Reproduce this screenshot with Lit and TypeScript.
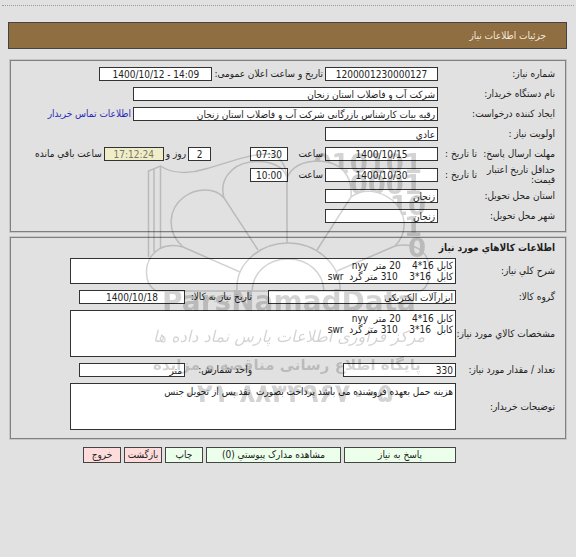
import { LitElement, html, css, svg } from "lit";
import { customElement } from "lit/decorators.js";

const GOODS = "کابل 16*4    20 متر  nyy\nکابل  16*3    310 متر گرد  swr";
const NOTES = "هزینه حمل بعهده فروشنده می باشد پرداخت بصورت  نقد پس از تحویل جنس";

@customElement("need-watermark")
export class NeedWatermark extends LitElement {
  static styles = css`
    :host { display: block; pointer-events: none; direction: ltr; }
    .art { display: block; width: 100%; opacity: 0.17; }
    .line { fill: none; stroke: #000; stroke-width: 1.5; }
    .digits { font: bold 26px "DejaVu Sans", sans-serif; }
    .latin { font: bold 28px "DejaVu Sans", sans-serif; }
    .script { font: italic 16px "DejaVu Sans", sans-serif; direction: rtl; }
    .slogan { font: bold 15px "DejaVu Sans", sans-serif; direction: rtl; }
    .phone { font: bold 26px "DejaVu Sans", sans-serif; }
  `;

  render() {
    return html`
      <svg class="art" viewBox="142 140 292 270" aria-hidden="true">
        ${svg`
          <defs>
            <mask id="behind">
              <rect x="142" y="140" width="292" height="270" fill="#fff" />
              <path fill="#000" d="M287 243V178C292 165 304 161 320 161C340 162 353 175 351 197C363 188 379 190 392 200C404 211 407 232 395 246L340 300H287Z" />
            </mask>
          </defs>
          <g class="line">
            <path d="M148.500 257V171L160.500 166V249M154 252V169M160.500 166C172 174 190 174 205 169C230 162 250 154 268 154Q285 156 287 178V243" />
            <path d="M258 250L224 198C219 180 231 165 250 162C270 160 284 166 287 178C292 165 304 161 320 161C340 162 353 175 351 197L317 250" />
            <path d="M224 198C215 187 196 188 184 197C168 209 166 232 183 247L240 272M183 247C165 242 151 250 147 266C145 279 149 287 156 291" />
            <path d="M351 197C363 188 379 190 392 200C406 211 409 232 395 246L337 271M395 246C413 242 427 250 429 265C431 279 428 287 421 291" />
            <path d="M237 291C235 263 261 243 288 243S341 263 340 291M252 291C253 272 268 259 288 259S323 272 324 291M156 291H421" />
          </g>
          <g class="digits" mask="url(#behind)">
            <text x="422" y="173" text-anchor="end">010101</text>
            <text x="422" y="194" text-anchor="end">0001</text>
            <text x="426" y="215" text-anchor="end">10</text>
            <text x="422" y="236" text-anchor="end">1</text>
            <text x="426" y="257" text-anchor="end">0</text>
          </g>
          <text class="latin" x="289" y="311" text-anchor="middle">ParsNamadData</text>
          <text class="script" x="289" y="342" text-anchor="middle">مرکز فرآوری اطلاعات پارس نماد داده ها</text>
          <text class="slogan" x="287" y="370" text-anchor="middle">پایگاه اطلاع رسانی مناقصه و مزایده</text>
          <text class="phone" x="287" y="402" text-anchor="middle">۰۲۱-۸۸۳۴۹۶۷۰-۵</text>
        `}
      </svg>
    `;
  }
}

@customElement("app-root")
export class AppRoot extends LitElement {
  static styles = css`
    :host {
      display: block;
      direction: rtl;
      min-height: 100vh;
      box-sizing: border-box;
      padding: 5px 2px 0;
      background: #e1e1e1;
      color: #222;
      font: 10px/10px "DejaVu Sans Condensed", "DejaVu Sans", sans-serif;
    }
    * { box-sizing: border-box; }
    .rule { border: 0; border-top: 1px dotted #999; margin: 0; }
    .title {
      margin: 16px 7px 0 6px;
      height: 27px;
      padding: 0 20px;
      border: 1px solid #444;
      background: #8f6e42;
      color: #f3eadb;
      font-size: 10px;
      font-weight: normal;
      line-height: 26px;
    }
    .page { position: relative; margin: 11px 8px 0; }
    .panel {
      margin: 0 0 5px;
      padding: 3px 10px 5px;
      border: 1px solid #808080;
      box-shadow: 0 0 0 1px #c6c6c6;
    }
    .row { display: flex; align-items: center; min-height: 20px; }
    .row.tall { min-height: 22px; }
    .label { flex: none; width: 117px; white-space: nowrap; }
    .label.short { width: 78px; }
    .label.wrap { white-space: normal; padding-left: 4px; }
    .label.till { width: 39px; }
    .label.goods { width: 99px; }
    .label.second { width: 67px; margin-right: 16px; }
    .text { flex: none; white-space: nowrap; padding: 0 2px; }
    .hour { width: 37px; }
    .spacer { flex: none; width: 39px; }
    .fill { flex: none; width: 75px; }
    .field {
      flex: none;
      display: block;
      height: 14px;
      margin: 0;
      padding: 0 2px;
      border: 1px solid #333;
      border-radius: 0;
      background: #fff;
      color: #222;
      font: inherit;
      line-height: 12px;
      outline: none;
    }
    .center { text-align: center; }
    .w-xs { width: 23px; }
    .w-s { width: 38px; }
    .w-m { width: 60px; }
    .w-d { width: 106px; }
    .w-n { width: 113px; }
    .w-g { width: 188px; }
    .w-l { width: 305px; }
    .left { background: #f0eec8; color: #776; }
    .contact { color: #2a2ab8; text-decoration: none; white-space: nowrap; padding: 0 2px; }
    .heading { margin: 0; font-size: 10px; line-height: 14px; }
    .area {
      flex: 1;
      height: 47px;
      margin-left: 49px;
      padding: 2px;
      resize: none;
      overflow: hidden;
      line-height: 11px;
    }
    .area.low { height: 26px; padding: 1px 2px; }
    .row.block { margin: 3px 0; }
    .actions { display: flex; gap: 3px; margin: 8px 110px 0 0; }
    .action {
      height: 16px;
      padding: 0;
      border: 1px solid #444;
      border-radius: 0;
      background: #ebffeb;
      color: #222;
      font: inherit;
      white-space: nowrap;
    }
    .action.wide { width: 135px; }
    .action.mid { width: 112px; }
    .action.small { width: 38px; }
    .action.exit { background: #ffdcdc; }
    .mark { position: absolute; top: 80px; left: 0; right: 0; width: 292px; margin: 0 auto; }
  `;

  private field(id: string, value: string, cls: string) {
    return html`<input class="field ${cls}" id=${id} .value=${value} readonly />`;
  }

  private label(id: string, text: string, cls = "") {
    return html`<label class="label ${cls}" for=${id}>${text}</label>`;
  }

  render() {
    return html`
      <hr class="rule" />
      <h1 class="title">جزئیات اطلاعات نیاز</h1>
      <main class="page">
        <section class="panel">
          <div class="row">
            ${this.label("number", "شماره نیاز:")}
            ${this.field("number", "1200001230000127", "w-n center")}
            <label class="text" for="announced">تاریخ و ساعت اعلان عمومی:</label>
            <input class="field w-n center" id="announced" dir="ltr" .value=${"1400/10/12 - 14:09"} readonly />
          </div>
          <div class="row">
            ${this.label("buyer", "نام دستگاه خریدار:")}
            ${this.field("buyer", "شرکت آب و فاضلاب استان زنجان", "w-l")}
          </div>
          <div class="row">
            ${this.label("creator", "ایجاد کننده درخواست:")}
            ${this.field("creator", "رقیه بیات کارشناس بازرگانی شرکت آب و فاضلاب استان زنجان", "w-l")}
            <a class="contact" href="#contact">اطلاعات تماس خریدار</a>
          </div>
          <div class="row">
            ${this.label("priority", "اولویت نیاز :")}
            ${this.field("priority", "عادي", "w-n")}
          </div>
          <div class="row">
            ${this.label("deadline", "مهلت ارسال پاسخ:", "short")}
            ${this.label("deadline", "تا تاریخ :", "till")}
            ${this.field("deadline", "1400/10/15", "w-n center")}
            <label class="text hour" for="deadline-hour">ساعت</label>
            ${this.field("deadline-hour", "07:30", "w-s center")}
            <span class="spacer"></span>
            ${this.field("days", "2", "w-xs center")}
            <label class="text" for="days">روز و</label>
            ${this.field("remaining", "17:12:24", "w-m center left")}
            <label class="text" for="remaining">ساعت باقي مانده</label>
          </div>
          <div class="row tall">
            ${this.label("validity", "حداقل تاریخ اعتبار قیمت:", "short wrap")}
            ${this.label("validity", "تا تاریخ :", "till")}
            ${this.field("validity", "1400/10/30", "w-n center")}
            <label class="text hour" for="validity-hour">ساعت</label>
            ${this.field("validity-hour", "10:00", "w-s center")}
          </div>
          <div class="row">
            ${this.label("province", "استان محل تحویل:")}
            ${this.field("province", "زنجان", "w-n")}
          </div>
          <div class="row">
            ${this.label("city", "شهر محل تحویل:")}
            ${this.field("city", "زنجان", "w-n")}
          </div>
        </section>

        <section class="panel">
          <h2 class="heading">اطلاعات کالاهاي مورد نیاز</h2>
          <div class="row block">
            ${this.label("summary", "شرح کلي نیاز:", "goods")}
            <textarea class="field area low" id="summary" .value=${GOODS} readonly></textarea>
          </div>
          <div class="row">
            ${this.label("group", "گروه کالا:", "goods")}
            ${this.field("group", "ابزارآلات الکتریکی", "w-g")}
            ${this.label("needed", "تاریخ نیاز به کالا:", "second")}
            ${this.field("needed", "1400/10/18", "w-d center")}
          </div>
          <div class="row block">
            ${this.label("specs", "مشخصات کالاي مورد نیاز:", "goods")}
            <textarea class="field area" id="specs" .value=${GOODS} readonly></textarea>
          </div>
          <div class="row">
            ${this.label("amount", "تعداد / مقدار مورد نیاز:", "goods")}
            ${this.field("amount", "330", "w-n")}
            <span class="fill"></span>
            ${this.label("unit", "واحد شمارش:", "second")}
            ${this.field("unit", "متر", "w-d")}
          </div>
          <div class="row block">
            ${this.label("notes", "توضیحات خریدار:", "goods")}
            <textarea class="field area" id="notes" .value=${NOTES} readonly></textarea>
          </div>
        </section>

        <div class="actions">
          <button class="action mid">پاسخ به نیاز</button>
          <button class="action wide">مشاهده مدارک پیوستي (0)</button>
          <button class="action small">چاپ</button>
          <button class="action small exit">بازگشت</button>
          <button class="action small exit">خروج</button>
        </div>
        <need-watermark class="mark"></need-watermark>
      </main>
    `;
  }
}
